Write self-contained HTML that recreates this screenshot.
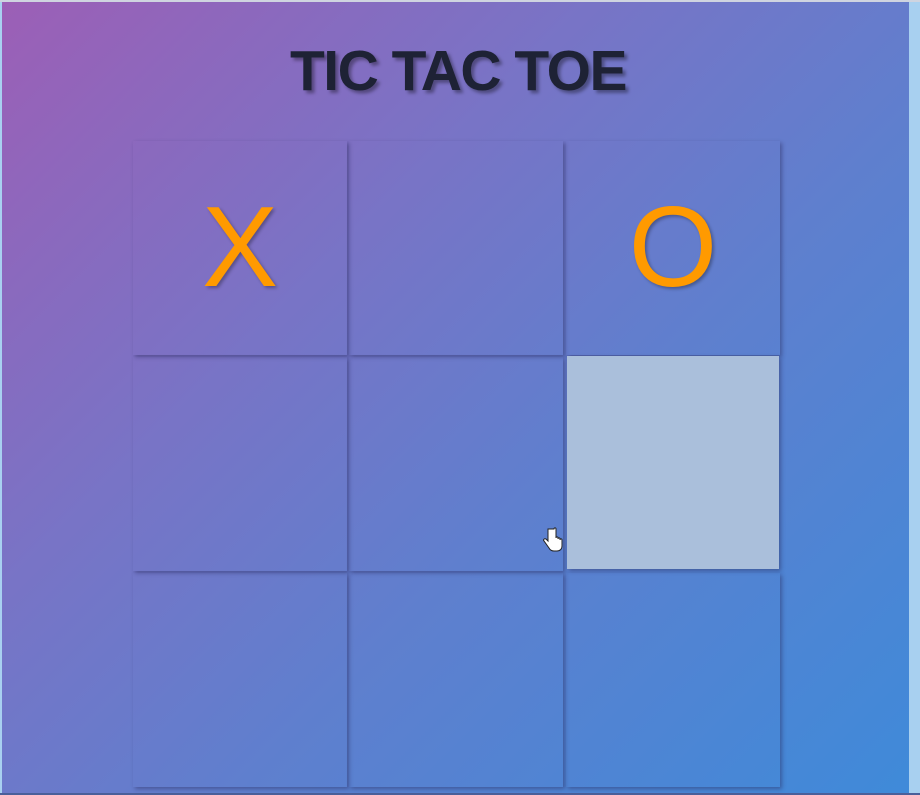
<!DOCTYPE html>
<html><head><style>
html,body{margin:0;padding:0;width:920px;height:795px;overflow:hidden;background:#a8d0f0;}
.main{position:absolute;left:2px;top:2px;width:907px;height:791px;background:linear-gradient(135deg,#9c5fb6 0%,#7874c6 35%,#5f7fce 60%,#3f8ad9 100%);}
.top{position:absolute;left:0;top:0;width:920px;height:2px;background:#cfd4e0;}
.bot{position:absolute;left:0;top:793px;width:920px;height:2px;background:#4a5f9a;}
h1{position:absolute;left:0;top:38px;width:916px;margin:0;text-align:center;font:bold 57px "Liberation Sans",sans-serif;letter-spacing:-1.5px;color:#1e2235;text-shadow:3px 3px 3px rgba(0,0,0,.35);}
.c{position:absolute;width:214px;height:214px;box-shadow:2px 2px 4px rgba(40,40,90,.45);text-align:center;font:114px/214px "Liberation Sans",sans-serif;color:#ff9a00;text-shadow:2px 2px 3px rgba(0,0,0,.3);}
</style></head><body>
<div class="top"></div>
<div class="main"></div>
<div class="bot"></div>
<h1>TIC TAC TOE</h1>
<div class="c" style="left:133px;top:141px">X</div>
<div class="c" style="left:349px;top:141px"></div>
<div class="c" style="left:566px;top:141px">O</div>
<div class="c" style="left:133px;top:357px"></div>
<div class="c" style="left:349px;top:357px"></div>
<div class="c" style="left:567px;top:356px;width:212px;height:213px;background:#aabfdb;"></div>
<div class="c" style="left:133px;top:573px"></div>
<div class="c" style="left:349px;top:573px"></div>
<div class="c" style="left:566px;top:573px"></div>
<svg style="position:absolute;left:542px;top:526px" width="24" height="30" viewBox="0 0 24 30"><path d="M6 3 v12 l-2-2 c-2-1-3 1-2 2 l5 7 c1 2 3 3 5 3 h3 c3 0 5-2 5-5 v-6 c0-1.5-2-1.5-2 0 v-1 c0-1.5-2-1.5-2 0 v-1 c0-1.5-2-1.5-2 0 v-9 c0-1.5-2-1.5-2 0z" fill="#fff" stroke="#222" stroke-width="1"/></svg>
</body></html>
